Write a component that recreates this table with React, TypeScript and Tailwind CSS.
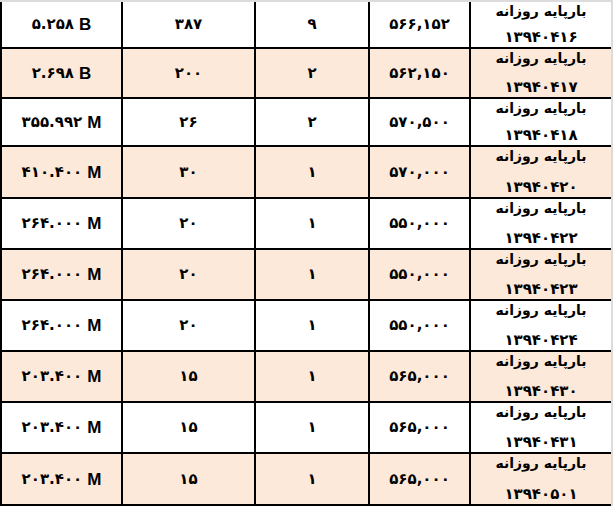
import React from "react";

type Row = { a: string; unit: string; b: string; c: string; d: string; date: string; h: string };

const rows: Row[] = [
  { a: "۵.۲۵۸", unit: "B", b: "۳۸۷", c: "۹", d: "۵۶۶,۱۵۲", date: "۱۳۹۴۰۴۱۶", h: "h-[47px]" },
  { a: "۲.۶۹۸", unit: "B", b: "۲۰۰", c: "۲", d: "۵۶۲,۱۵۰", date: "۱۳۹۴۰۴۱۷", h: "h-[50px]" },
  { a: "۳۵۵.۹۹۲", unit: "M", b: "۲۶", c: "۲", d: "۵۷۰,۵۰۰", date: "۱۳۹۴۰۴۱۸", h: "h-[48px]" },
  { a: "۴۱۰.۴۰۰", unit: "M", b: "۳۰", c: "۱", d: "۵۷۰,۰۰۰", date: "۱۳۹۴۰۴۲۰", h: "h-[52px]" },
  { a: "۲۶۴.۰۰۰", unit: "M", b: "۲۰", c: "۱", d: "۵۵۰,۰۰۰", date: "۱۳۹۴۰۴۲۲", h: "h-[51px]" },
  { a: "۲۶۴.۰۰۰", unit: "M", b: "۲۰", c: "۱", d: "۵۵۰,۰۰۰", date: "۱۳۹۴۰۴۲۳", h: "h-[51px]" },
  { a: "۲۶۴.۰۰۰", unit: "M", b: "۲۰", c: "۱", d: "۵۵۰,۰۰۰", date: "۱۳۹۴۰۴۲۴", h: "h-[51px]" },
  { a: "۲۰۳.۴۰۰", unit: "M", b: "۱۵", c: "۱", d: "۵۶۵,۰۰۰", date: "۱۳۹۴۰۴۳۰", h: "h-[51px]" },
  { a: "۲۰۳.۴۰۰", unit: "M", b: "۱۵", c: "۱", d: "۵۶۵,۰۰۰", date: "۱۳۹۴۰۴۳۱", h: "h-[51px]" },
  { a: "۲۰۳.۴۰۰", unit: "M", b: "۱۵", c: "۱", d: "۵۶۵,۰۰۰", date: "۱۳۹۴۰۵۰۱", h: "h-[52px]" },
];

const fa = "font-['DejaVu_Sans',sans-serif] font-bold text-[15px] text-black";
const faTitle = "font-['DejaVu_Sans',sans-serif] font-bold text-[14px] text-black";

export default function App() {
  return (
    <div className="w-[613px] h-[506px] bg-white overflow-hidden">
      <div className="w-[613px] border-t-2 border-r-2 border-[#dcdcdc]">
        {rows.map((r, i) => (
          <div
            key={i}
            className={`flex border-b-2 border-black ${r.h} ${i % 2 === 1 ? "bg-[#fde9d9]" : "bg-white"}`}
          >
            <div className="w-[121px] shrink-0 border-l-2 border-black flex items-center justify-center">
              <span dir="ltr" className="flex items-center gap-[5px]">
                <span className={fa}>{r.a}</span>
                <span className="font-['Liberation_Sans',Arial,sans-serif] font-bold text-[17px] leading-none text-black">
                  {r.unit}
                </span>
              </span>
            </div>
            <div className="w-[133px] shrink-0 border-l-2 border-black flex items-center justify-center">
              <span className={fa}>{r.b}</span>
            </div>
            <div className="w-[114px] shrink-0 border-l-2 border-black flex items-center justify-center">
              <span className={fa}>{r.c}</span>
            </div>
            <div className="w-[101px] shrink-0 border-l-2 border-black flex items-center justify-center">
              <span dir="ltr" className={fa}>{r.d}</span>
            </div>
            <div
              dir="rtl"
              className="w-[142px] shrink-0 border-l-2 border-black flex flex-col items-center justify-between"
            >
              <span className={`${faTitle} leading-[19px]`}>بارپایه روزانه</span>
              <span className={`${fa} leading-[19px]`}>{r.date}</span>
            </div>
          </div>
        ))}
      </div>
    </div>
  );
}
